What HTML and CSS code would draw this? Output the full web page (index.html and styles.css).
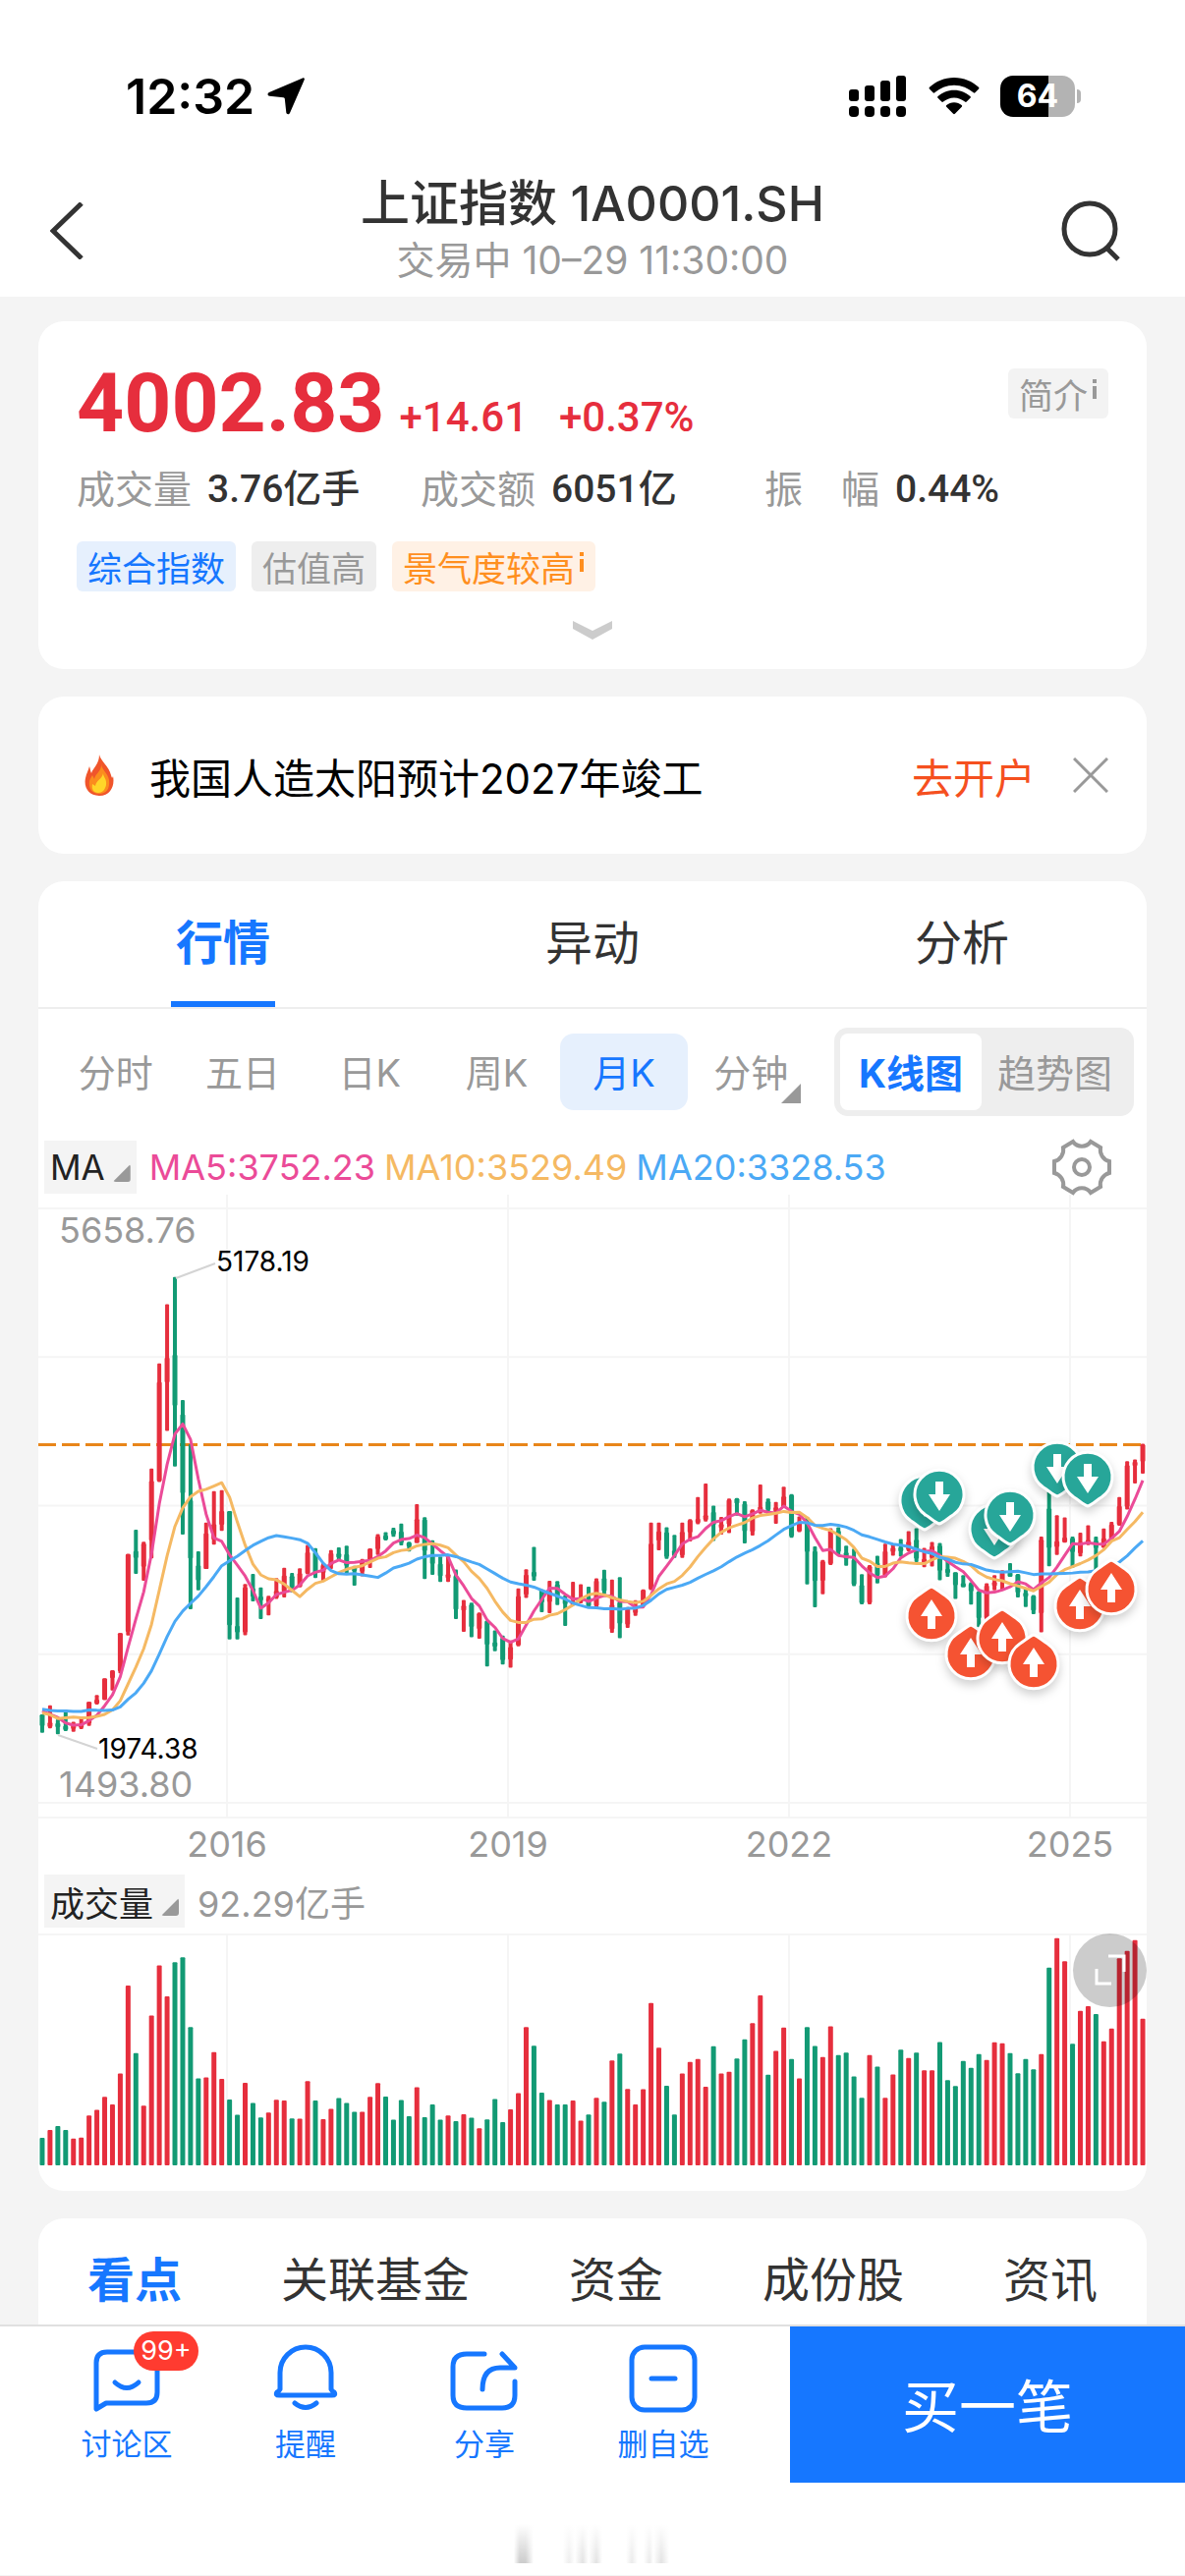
FILE: index.html
```html
<!DOCTYPE html>
<html lang="zh-CN">
<head>
    <meta charset="UTF-8">
    <meta name="viewport" content="width=device-width, initial-scale=1.0">
    <title>上证指数 1A0001.SH</title>
    <link rel="stylesheet" href="styles.css">
</head>
<body>
    <div class="status-bar">
        <div class="status-left">
            <span class="clock">12:32</span>
            <svg width="40" height="40" viewBox="0 0 40 40"><path d="M37 1.5c1.4-.6 2.300.3 1.700 1.700L24 37c-.8 1.900-3.400 1.700-3.700-.4L18.800 22.600c-.1-.9-.5-1.300-1.400-1.400L3.300 19.700c-2.100-.2-2.400-2.900-.4-3.700z"/></svg>
        </div>
        <div class="status-right">
            <svg width="60" height="42" viewBox="0 0 60 42">
                <rect x="0" y="14" width="10" height="12" rx="3"/><rect x="16" y="10" width="10" height="16" rx="3"/>
                <rect x="32" y="5" width="10" height="21" rx="3"/><rect x="48" y="0" width="10" height="26" rx="3"/>
                <rect x="0" y="31" width="10" height="11" rx="4"/><rect x="16" y="31" width="10" height="11" rx="4"/>
                <rect x="32" y="31" width="10" height="11" rx="4"/><rect x="48" y="31" width="10" height="11" rx="4"/>
            </svg>
            <svg width="52" height="38" viewBox="0 0 52 38">
                <path d="M26 0c10 0 18.500 3.900 25 9.800.6.6.6 1.200.1 1.700l-3.700 3.800c-.5.5-1.100.5-1.700 0C40.400 10.600 33.600 7.700 26 7.700S11.600 10.600 6.300 15.300c-.6.5-1.200.5-1.700 0L.9 11.500c-.5-.5-.5-1.100.1-1.700C7.500 3.900 16 0 26 0z"/>
                <path d="M26 12.700c6.500 0 12.200 2.500 16.400 6.300.7.6.7 1.200.1 1.800l-3.800 3.800c-.5.5-1.100.5-1.700 0-2.900-2.600-6.700-4.200-11-4.200s-8.100 1.600-11 4.200c-.6.5-1.200.5-1.700 0l-3.800-3.800c-.6-.6-.6-1.200.1-1.800 4.200-3.800 9.900-6.300 16.400-6.300z"/>
                <path d="M26 25.200c3 0 5.700 1.100 7.700 2.800.6.500.6 1.200.1 1.700l-6.900 7c-.6.600-1.200.6-1.800 0l-6.900-7c-.5-.5-.5-1.200.1-1.700 2-1.700 4.700-2.800 7.700-2.800z"/>
            </svg>
            <span class="battery">64</span>
        </div>
    </div>

    <header class="nav">
        <button class="icon-btn back" type="button" aria-label="返回">
            <svg width="34" height="58" viewBox="0 0 34 58"><path d="M32 1L3 29l29 28" fill="none" stroke="#333" stroke-width="5"/></svg>
        </button>
        <div class="nav-title">
            <h1>上证指数 1A0001.SH</h1>
            <p>交易中 10–29 11:30:00</p>
        </div>
        <button class="icon-btn search" type="button" aria-label="搜索">
            <svg width="60" height="62" viewBox="0 0 60 62" fill="none" stroke="#333" stroke-width="5"><circle cx="29" cy="29" r="26"/><path d="M46 48l12 12"/></svg>
        </button>
    </header>

    <main>
        <section class="card quote">
            <div class="quote-top">
                <strong class="price">4002.83</strong>
                <span class="change">+14.61</span>
                <span class="change">+0.37%</span>
                <button class="chip chip-intro" type="button">简介<svg width="6" height="20" viewBox="0 0 6 20" fill="currentColor"><path d="M1 0h4v4H1zM1 7h4v13H1z"/></svg></button>
            </div>
            <dl class="metrics">
                <div><dt>成交量</dt><dd>3.76亿手</dd></div>
                <div><dt>成交额</dt><dd>6051亿</dd></div>
                <div><dt>振　幅</dt><dd>0.44%</dd></div>
            </dl>
            <div class="chips">
                <span class="chip chip-blue">综合指数</span>
                <span class="chip">估值高</span>
                <span class="chip chip-orange">景气度较高<svg width="6" height="20" viewBox="0 0 6 20" fill="currentColor"><path d="M1 0h4v4H1zM1 7h4v13H1z"/></svg></span>
            </div>
            <button class="expand" type="button" aria-label="展开">
                <svg width="42" height="20" viewBox="0 0 42 20"><path d="M1 1l20 10L41 1v8L21 20 1 9z" fill="#ccc"/></svg>
            </button>
        </section>

        <section class="card notice">
            <svg class="fire" width="30" height="42" viewBox="0 0 30 42">
                <path d="M15 0c1 6 10 12 12 21 1 3 1 4 2 1 2 9-2 20-14 20C4 42-1 33 1 24c1-5 3-8 4-12 1 3 1 5 2 7C9 13 15 10 15 0z" fill="#f0552b"/>
                <path d="M17 9c0 6 7 10 8 17 1 9-3 14-10 14S4 35 5 27c1-3 2-4 3-6l2 4c1-6 8-8 7-16z" fill="#fb8c1e"/>
                <path d="M19 19c0 4 4 6 3 12-1 5-4 8-8 8-5 0-7-4-6-9l3 2c1-6 7-7 8-13z" fill="#ffd629"/>
            </svg>
            <p>我国人造太阳预计2027年竣工</p>
            <a href="#open">去开户</a>
            <button class="icon-btn" type="button" aria-label="关闭">
                <svg width="36" height="36" viewBox="0 0 36 36"><path d="M1 1l34 34M35 1L1 35" stroke="#999" stroke-width="3"/></svg>
            </button>
        </section>

        <section class="card market">
            <nav class="tabs">
                <button class="active" type="button"><span>行情</span></button>
                <button type="button"><span>异动</span></button>
                <button type="button"><span>分析</span></button>
            </nav>

            <div class="period-row">
                <div class="periods">
                    <button type="button">分时</button>
                    <button type="button">五日</button>
                    <button type="button">日K</button>
                    <button type="button">周K</button>
                    <button class="active" type="button">月K</button>
                    <button class="more" type="button">分钟</button>
                </div>
                <div class="switch">
                    <button class="active" type="button">K线图</button>
                    <button type="button">趋势图</button>
                </div>
            </div>

            <div class="indicator-row">
                <button class="indicator" type="button">MA</button>
                <span class="ma5">MA5:3752.23</span>
                <span class="ma10">MA10:3529.49</span>
                <span class="ma20">MA20:3328.53</span>
                <button class="icon-btn gear" type="button" aria-label="设置">
                    <svg width="60" height="58" viewBox="0 0 60 58" fill="none" stroke="#999" stroke-width="4">
                        <path d="M21 3A11 11 0 0 0 39 3L49 9A12 12 0 0 0 58 23V35A12 12 0 0 0 49 49L39 55A11 11 0 0 0 21 55L11 49A12 12 0 0 0 2 35V23A12 12 0 0 0 11 9Z"/>
                        <circle cx="30" cy="29" r="8"/>
                    </svg>
                </button>
            </div>

            <svg class="chart" id="price" viewBox="0 0 1128 684"></svg>

            <div class="indicator-row volume-row">
                <button class="indicator" type="button">成交量</button>
                <span class="volume-value">92.29亿手</span>
            </div>

            <div class="volume-box">
                <svg class="chart" id="volume" viewBox="0 0 1128 236"></svg>
                <button class="fullscreen" type="button" aria-label="全屏">
                    <svg width="75" height="75" viewBox="0 0 75 75" fill="none" stroke="#fff" stroke-width="3"><path d="M36 23h16v16M24 36v15h15"/></svg>
                </button>
            </div>
        </section>

        <nav class="card sections">
            <a class="active" href="#view">看点</a>
            <a href="#fund">关联基金</a>
            <a href="#money">资金</a>
            <a href="#stocks">成份股</a>
            <a href="#news">资讯</a>
        </nav>
    </main>

    <footer>
        <div class="toolbar">
            <div class="actions">
                <button type="button">
                    <svg width="72" height="72" viewBox="0 0 72 72"><path d="M5 66V19Q5 8 16 8H56Q67 8 67 19V49Q67 60 56 60H15ZM24 39Q36 50 48 39"/></svg>
                    <span>讨论区</span>
                    <i class="badge">99+</i>
                </button>
                <button type="button">
                    <svg width="72" height="72" viewBox="0 0 72 72"><path d="M10 46V29A26 26 0 0 1 62 29V46Q63 48 65 49Q67 52 63 52H9Q5 52 7 49Q9 48 10 46ZM25 60Q36 69 47 60"/></svg>
                    <span>提醒</span>
                </button>
                <button type="button">
                    <svg width="72" height="72" viewBox="0 0 72 72"><path d="M36 10H18Q4 10 4 23V52Q4 65 18 65H54Q67 65 67 52V38M34 46Q34 24 52 24H67L54 10"/></svg>
                    <span>分享</span>
                </button>
                <button type="button">
                    <svg width="72" height="72" viewBox="0 0 72 72"><rect x="4" y="3" width="64" height="64" rx="13"/><path d="M24 35H48"/></svg>
                    <span>删自选</span>
                </button>
            </div>
            <button class="buy" type="button">买一笔</button>
        </div>
        <div class="home-area"><div class="shade"></div></div>
    </footer>

    <script src="chart.js"></script>
</body>
</html>
```
FILE: styles.css
```css
* {
    box-sizing: border-box;
}

body {
    margin: 0;
    background: #f4f4f4;
    color: #333;
    font-family: Inter, "Noto Sans CJK SC", sans-serif;
}

button {
    margin: 0;
    padding: 0;
    border: 0;
    background: none;
    color: inherit;
    font: inherit;
    cursor: pointer;
}

a {
    color: inherit;
    text-decoration: none;
}

h1, p, dl, dd {
    margin: 0;
}

svg {
    display: block;
    flex: none;
}

/* status bar */
.status-bar {
    display: flex;
    justify-content: space-between;
    align-items: center;
    height: 160px;
    padding: 36px 112px 0 128px;
    background: #fff;
    color: #000;
}

.status-left,
.status-right {
    display: flex;
    align-items: center;
}

.status-left {
    gap: 12px;
}

.status-right {
    gap: 21px;
}

.clock {
    font-size: 50px;
    font-weight: 600;
}

.battery {
    position: relative;
    width: 76px;
    height: 42px;
    border-radius: 13px;
    background: linear-gradient(90deg, #000 64%, #b3b3b3 64%);
    color: #fff;
    font-size: 32px;
    font-weight: 700;
    line-height: 42px;
    text-align: center;
}

.battery::after {
    content: "";
    position: absolute;
    top: 14px;
    right: -6px;
    width: 4px;
    height: 14px;
    border-radius: 0 4px 4px 0;
    background: #b3b3b3;
}

/* navigation */
.nav {
    display: grid;
    grid-template-columns: 1fr auto 1fr;
    align-items: center;
    padding: 17px 51px 9px;
    background: #fff;
}

.nav-title {
    text-align: center;
}

.nav-title h1 {
    font-size: 50px;
    font-weight: 500;
    line-height: 60px;
}

.nav-title p {
    color: #999;
    font-size: 39px;
    line-height: 56px;
}

.search {
    justify-self: end;
    margin-right: 15px;
}

.back {
    justify-self: start;
}

/* cards */
main {
    display: flex;
    flex-direction: column;
    gap: 28px;
    padding: 25px 39px 0;
}

.card {
    border-radius: 26px;
    background: #fff;
    overflow: hidden;
}

.quote {
    padding: 38px 39px 30px;
}

.quote-top {
    display: flex;
    align-items: baseline;
    height: 90px;
    color: #e62e3d;
    font-family: Roboto, sans-serif;
    line-height: 92px;
}

.price {
    margin-right: 15px;
    font-size: 84px;
    font-weight: 700;
}

.change {
    margin-right: 32px;
    font-size: 42px;
    font-weight: 500;
}

.chip {
    display: flex;
    gap: 4px;
    padding: 0 11px;
    border-radius: 6px;
    background: #eee;
    color: #999;
    font-family: "Noto Sans CJK SC", sans-serif;
    font-size: 35px;
    line-height: 51px;
}

.chip svg {
    margin-top: 11px;
}

.chip-intro {
    align-self: flex-start;
    margin: 10px 0 0 auto;
    background: #f3f3f3;
}

.chip-blue {
    background: #e6f0fd;
    color: #1677ff;
}

.chip-orange {
    background: #fff1e5;
    color: #ff8f1f;
}

.metrics {
    display: grid;
    grid-template-columns: repeat(3, 1fr);
    margin-top: 18px;
    line-height: 50px;
    white-space: nowrap;
}

.metrics div {
    display: flex;
    gap: 16px;
    height: 50px;
}

.metrics dt {
    color: #999;
    font-size: 39px;
}

.metrics dd {
    font-family: Roboto, "Noto Sans CJK SC", sans-serif;
    font-size: 39px;
    font-weight: 500;
}

.chips {
    display: flex;
    gap: 16px;
    margin-top: 28px;
}

.expand {
    display: block;
    margin: 29px auto 0;
}

.notice {
    display: flex;
    align-items: center;
    height: 160px;
    padding: 0 39px 0 47px;
    color: #000;
    font-size: 42px;
}

.notice p {
    margin-left: 36px;
}

.notice a {
    margin: 0 38px 0 auto;
    color: #f5501f;
}

/* market card */
.tabs {
    display: grid;
    grid-template-columns: repeat(3, 1fr);
    height: 130px;
    border-bottom: 2px solid #eee;
    font-size: 48px;
}

.tabs span {
    display: inline-block;
    height: 128px;
    padding: 0 5px;
    line-height: 126px;
}

.tabs .active span {
    border-bottom: 6px solid #1677ff;
}

.tabs .active,
.sections .active {
    color: #1677ff;
    font-weight: 700;
}

.period-row {
    display: flex;
    align-items: center;
    gap: 20px;
    padding: 19px 13px 0 14px;
    color: #999;
    font-size: 38px;
}

.periods {
    display: grid;
    flex: 1;
    grid-template-columns: repeat(6, 1fr);
}

.periods button {
    position: relative;
    height: 78px;
    padding-bottom: 3px;
    border-radius: 14px;
}

.periods .active {
    background: #e6f0fd;
    color: #1677ff;
}

.more::after {
    content: "";
    position: absolute;
    right: 14px;
    bottom: 7px;
    border-bottom: 20px solid #999;
    border-left: 20px solid transparent;
}

.switch {
    display: flex;
    padding: 6px;
    border-radius: 14px;
    background: #eee;
    font-size: 39px;
}

.switch button {
    height: 78px;
    padding: 0 16px 3px;
}

.switch .active {
    padding: 0 19px 3px;
    border-radius: 8px;
    background: #fff;
    color: #1677ff;
    font-weight: 700;
}

.indicator-row {
    display: flex;
    align-items: center;
    gap: 9px;
    height: 54px;
    margin: 25px 36px 1px 6px;
    font-size: 36px;
}

.indicator {
    display: flex;
    align-items: center;
    gap: 8px;
    height: 54px;
    margin-right: 4px;
    padding: 0 6px 0 6px;
    background: #f4f4f4;
    color: #222;
    font-size: 35px;
}

.indicator::after {
    content: "";
    width: 18px;
    height: 18px;
    margin-top: 12px;
    border-radius: 3px;
    background: #999;
    clip-path: polygon(100% 0, 100% 100%, 0 100%);
}

.ma5 {
    color: #eb4b98;
}

.ma10 {
    color: #f5b963;
}

.ma20 {
    color: #4ba9f5;
}

.gear {
    margin-left: auto;
}

.volume-row {
    margin: 8px 36px 6px 6px;
}

.volume-value {
    color: #999;
}

.chart {
    width: 100%;
    height: auto;
}

.grid {
    stroke: #f5f5f5;
    stroke-width: 2;
}

.up {
    fill: #e62e3d;
}

.down {
    fill: #129a74;
}

.line {
    fill: none;
    stroke-width: 3;
    stroke-linejoin: round;
}

.line.ma5 {
    stroke: #eb4b98;
}

.line.ma10 {
    stroke: #f5b963;
}

.line.ma20 {
    stroke: #4ba9f5;
}

.current {
    stroke: #e8861a;
    stroke-width: 3;
    stroke-dasharray: 18 6;
}

.leader {
    stroke: #d4d4d4;
    stroke-width: 2;
}

.axis {
    fill: #999;
    font-size: 36px;
}

.extreme {
    fill: #000;
    font-size: 28px;
}

.marker {
    filter: drop-shadow(0 5px 5px rgba(0, 0, 0, 0.18));
}

.marker path {
    stroke: #fff;
    stroke-width: 3;
}

.marker .arrow {
    fill: #fff;
    stroke: none;
}

.buy-mark {
    fill: #f55332;
}

.sell-mark {
    fill: #27a699;
}

.volume-box {
    position: relative;
    padding-bottom: 26px;
}

.fullscreen {
    position: absolute;
    top: 0;
    right: 0;
    border-radius: 50%;
    background: rgba(0, 0, 0, 0.2);
}

.sections {
    display: flex;
    justify-content: space-between;
    padding: 18px 50px 0;
    border-radius: 26px 26px 0 0;
    font-size: 48px;
    line-height: 90px;
}

/* bottom toolbar */
footer {
    border-top: 2px solid #e0e0e0;
    background: #fff;
}

.toolbar {
    display: grid;
    grid-template-columns: 2fr 1fr;
    height: 159px;
}

.actions {
    display: grid;
    grid-template-columns: repeat(4, 1fr);
    padding: 0 38px;
}

.actions button {
    position: relative;
    display: flex;
    flex-direction: column;
    align-items: center;
    padding-top: 18px;
    color: #1677ff;
    font-size: 31px;
    line-height: 44px;
}

.actions svg {
    margin-bottom: 8px;
    fill: none;
    stroke: #1677ff;
    stroke-width: 5;
    stroke-linecap: round;
    stroke-linejoin: round;
}

.badge {
    position: absolute;
    top: 5px;
    left: 54%;
    padding: 0 7px;
    border-radius: 20px;
    background: #ff3b30;
    color: #fff;
    font-size: 27px;
    font-style: normal;
    line-height: 40px;
}

.buy {
    padding-bottom: 4px;
    background: #1677ff;
    color: #fff;
    font-size: 58px;
}

.home-area {
    height: 94px;
    padding-top: 42px;
}

.shade {
    width: 160px;
    height: 40px;
    margin: 0 auto;
    background:
        linear-gradient(#fff, transparent),
        linear-gradient(90deg, #fff, #ccc 6px, #ccc 12px, #fff 20px, #fff 50px, #eee 56px, #fff 62px, #e2e2e2 70px, #fff 76px, #e2e2e2 84px, #fff 90px, #fff 114px, #eaeaea 120px, #fff 126px, #fff 132px, #eaeaea 138px, #fff 142px, #e2e2e2 150px, #fff 158px);
}
```
FILE: chart.js
```js
// closes of the 19 months before the first candle, needed for the moving averages
const pastCloses = [
    2225.43, 2103.63, 2047.52, 2086.17, 2068.88, 1980.12, 2269.13, 2385.42, 2365.59, 2236.62,
    2177.91, 2300.60, 1979.21, 1993.80, 2098.38, 2174.67, 2141.61, 2220.50, 2115.98
];

// [open, high, low, close, volume], one row per month from 2014-01
const months = [
    [2112, 2113, 1984, 2033.08, 84], [2026, 2177, 2015, 2056.30, 108], [2051, 2079, 1974, 2033.31, 120],
    [2032, 2146, 1997, 2026.36, 108], [2022, 2061, 1991, 2039.21, 82], [2039, 2088, 2010, 2048.33, 85],
    [2050, 2202, 2033, 2201.56, 152], [2193, 2249, 2183, 2217.20, 169], [2217, 2366, 2214, 2363.87, 209],
    [2368, 2423, 2280, 2420.18, 186], [2417, 2683, 2401, 2682.84, 280], [2691, 3239, 2666, 3234.68, 548],
    [3258, 3407, 3098, 3210.36, 342], [3148, 3324, 3050, 3310.30, 182], [3332, 3836, 3206, 3747.90, 457],
    [3748, 4572, 3742, 4441.66, 610], [4441, 4987, 4100, 4611.74, 515], [4633, 5178, 3850, 4277.22, 619],
    [4214, 4317, 3374, 3663.73, 634], [3614, 4006, 2850, 3205.99, 422], [3157, 3256, 2983, 3052.78, 265],
    [3133, 3457, 3133, 3382.56, 268], [3338, 3678, 3302, 3445.40, 345], [3442, 3684, 3399, 3539.18, 264],
    [3536, 3539, 2638, 2737.60, 201], [2733, 2933, 2638, 2687.98, 154], [2688, 3028, 2668, 3003.92, 252],
    [2997, 3097, 2905, 2938.32, 190], [2940, 3004, 2781, 2916.62, 146], [2917, 2945, 2807, 2929.61, 161],
    [2932, 3069, 2922, 2979.34, 200], [2974, 3140, 2932, 3085.49, 198], [3083, 3105, 2969, 3004.70, 143],
    [3009, 3137, 3004, 3100.49, 142], [3102, 3301, 3094, 3250.03, 257], [3249, 3279, 3068, 3103.64, 198],
    [3105, 3174, 3044, 3159.17, 141], [3160, 3264, 3132, 3241.73, 172], [3240, 3283, 3193, 3222.51, 205],
    [3235, 3295, 3097, 3154.66, 190], [3145, 3154, 3016, 3117.18, 163], [3114, 3202, 3081, 3192.43, 163],
    [3193, 3276, 3139, 3273.03, 209], [3272, 3376, 3231, 3360.81, 251], [3366, 3391, 3332, 3348.94, 210],
    [3402, 3421, 3357, 3393.34, 139], [3393, 3450, 3297, 3317.19, 199], [3316, 3324, 3254, 3307.17, 150],
    [3315, 3587, 3315, 3480.83, 238], [3479, 3495, 3062, 3259.41, 147], [3235, 3333, 3091, 3168.90, 186],
    [3169, 3220, 3041, 3082.23, 139], [3087, 3220, 3041, 3095.47, 152], [3084, 3129, 2782, 2847.42, 135],
    [2841, 2915, 2691, 2876.40, 156], [2882, 2897, 2653, 2725.25, 145], [2713, 2828, 2644, 2821.35, 113],
    [2768, 2771, 2449, 2602.78, 140], [2618, 2702, 2555, 2588.19, 202], [2648, 2666, 2462, 2493.90, 132],
    [2498, 2631, 2441, 2584.57, 171], [2598, 2997, 2590, 2940.95, 220], [2954, 3130, 2930, 3090.76, 422],
    [3111, 3288, 3050, 3078.34, 365], [2985, 2990, 2830, 2898.70, 222], [2901, 3050, 2822, 2978.88, 199],
    [3024, 3048, 2879, 2932.51, 186], [2920, 2948, 2733, 2886.24, 186], [2886, 3042, 2878, 2905.19, 198],
    [2906, 3026, 2891, 2929.06, 136], [2932, 3008, 2858, 2871.98, 155], [2874, 3066, 2857, 3050.12, 206],
    [3066, 3127, 2956, 2976.53, 194], [2710, 3058, 2685, 2880.30, 320], [2899, 3075, 2647, 2750.30, 341],
    [2743, 2865, 2719, 2860.08, 233], [2832, 2914, 2803, 2852.35, 186], [2871, 2990, 2871, 2984.67, 232],
    [2991, 3458, 2984, 3310.01, 495], [3332, 3458, 3263, 3395.68, 359], [3389, 3425, 3202, 3218.05, 243],
    [3262, 3371, 3209, 3224.53, 155], [3228, 3457, 3209, 3391.76, 280], [3388, 3482, 3325, 3473.07, 315],
    [3474, 3637, 3446, 3483.07, 324], [3477, 3732, 3465, 3509.08, 240], [3531, 3577, 3328, 3441.91, 363],
    [3444, 3497, 3373, 3446.86, 280], [3446, 3626, 3384, 3615.48, 285], [3625, 3629, 3505, 3591.20, 326],
    [3588, 3608, 3312, 3397.36, 384], [3393, 3551, 3367, 3543.94, 434], [3544, 3724, 3520, 3568.17, 518],
    [3605, 3626, 3518, 3547.34, 276], [3551, 3602, 3449, 3563.89, 349], [3566, 3708, 3560, 3639.78, 420],
    [3650, 3657, 3350, 3361.44, 324], [3397, 3500, 3390, 3462.31, 265], [3465, 3497, 3024, 3252.20, 422],
    [3256, 3290, 2863, 3047.06, 364], [3050, 3196, 2955, 3186.43, 330], [3169, 3418, 3160, 3398.62, 424],
    [3399, 3424, 3226, 3253.24, 336], [3247, 3295, 3155, 3202.14, 344], [3196, 3275, 3012, 3024.39, 271],
    [3018, 3096, 2885, 2893.48, 206], [2894, 3159, 2885, 3151.34, 336], [3175, 3226, 3031, 3089.26, 301],
    [3088, 3310, 3073, 3255.67, 206], [3256, 3310, 3225, 3279.61, 277], [3283, 3342, 3219, 3272.86, 353],
    [3267, 3397, 3257, 3323.28, 327], [3337, 3418, 3180, 3204.56, 344], [3194, 3280, 3144, 3202.06, 290],
    [3209, 3322, 3150, 3291.04, 290], [3295, 3315, 3053, 3119.88, 376], [3132, 3205, 3078, 3110.48, 260],
    [3109, 3110, 2923, 3018.77, 242], [3032, 3090, 3005, 3029.67, 318], [3029, 3040, 2882, 2974.93, 297],
    [2972, 2977, 2724, 2788.55, 339], [2788, 3032, 2635, 3015.17, 321], [3015, 3090, 2983, 3041.17, 375],
    [3043, 3123, 2985, 3104.82, 372], [3106, 3174, 3078, 3086.81, 342], [3093, 3098, 2933, 2967.40, 281],
    [2965, 3000, 2865, 2938.75, 324], [2943, 2950, 2816, 2842.21, 293], [2823, 3360, 2689, 3336.50, 339],
    [3555, 3674, 3152, 3279.82, 603], [3288, 3509, 3230, 3326.46, 693], [3320, 3494, 3316, 3351.76, 622],
    [3347, 3359, 3140, 3250.60, 371], [3243, 3387, 3220, 3320.90, 471], [3325, 3439, 3300, 3335.75, 485],
    [3331, 3359, 3040, 3279.03, 461], [3282, 3417, 3280, 3347.49, 378], [3340, 3462, 3336, 3444.43, 417],
    [3442, 3636, 3435, 3573.21, 631], [3568, 3888, 3548, 3857.93, 654], [3876, 3899, 3732, 3882.78, 687],
    [3885, 4010, 3800, 4002.83, 447]
];

const WIDTH = 1128;
const STEP = WIDTH / months.length;
const MAX_PRICE = 5658.76;
const MIN_PRICE = 1493.80;
const PLOT_TOP = 14;
const PLOT_HEIGHT = 605;
const MAX_VOLUME = 707;
const years = [[192, 2016], [478, 2019], [764, 2022], [1050, 2025]];

const xOf = i => (i + 0.5) * STEP;
const yOf = p => PLOT_TOP + (MAX_PRICE - p) / (MAX_PRICE - MIN_PRICE) * PLOT_HEIGHT;
const line = (cls, x1, y1, x2, y2) => `<line class="${cls}" x1="${x1}" y1="${y1}" x2="${x2}" y2="${y2}"/>`;
const bar = (cls, x, w, top, bottom) =>
    `<rect class="${cls}" x="${x - w / 2}" y="${top}" width="${w}" height="${Math.max(bottom - top, 4)}" rx="1"/>`;

function average(n) {
    const closes = pastCloses.concat(months.map(m => m[3]));
    const points = months.map((m, i) => {
        const end = i + pastCloses.length + 1;
        const sum = closes.slice(end - n, end).reduce((a, b) => a + b, 0);
        return `${xOf(i)},${yOf(sum / n)}`;
    });
    return `<polyline class="line ma${n}" points="${points.join(' ')}"/>`;
}

// drop shaped flag, the tip points up for buy and down for sell
function marker(x, y, type) {
    const turn = type === 'sell' ? 180 : 0;
    return `<g class="marker"><g transform="translate(${x} ${y}) rotate(${turn})">
        <path class="${type}-mark" d="M0-29C4-28 9-23 14-20A25 25 0 1 1-14-20C-9-23-4-28 0-29Z"/>
        <path class="arrow" d="M0-16L11 1H4V14H-4V1H-11Z"/></g></g>`;
}

function drawPrice() {
    let out = '';
    for (let i = 0; i < 5; i++) {
        const y = PLOT_TOP + PLOT_HEIGHT / 4 * i;
        out += line('grid', 0, y, WIDTH, y);
    }
    out += line('grid', 0, 634, WIDTH, 634);
    years.forEach(([x, year]) => {
        out += line('grid', x, 0, x, 634);
        out += `<text class="axis" x="${x}" y="674" text-anchor="middle">${year}</text>`;
    });
    out += line('current', 0, yOf(4002.83), WIDTH, yOf(4002.83));
    months.forEach(([open, high, low, close], i) => {
        const cls = close >= open ? 'up' : 'down';
        out += bar(cls, xOf(i), 4, yOf(high), yOf(low));
        out += bar(cls, xOf(i), 5, yOf(Math.max(open, close)), yOf(Math.min(open, close)));
    });
    out += average(5) + average(10) + average(20);
    out += line('leader', 140, 85, 180, 70) + line('leader', 20, 550, 60, 564);
    out += '<text class="extreme" x="181" y="78">5178.19</text><text class="extreme" x="61" y="574">1974.38</text>';
    out += '<text class="axis" x="21" y="49">5658.76</text><text class="axis" x="21" y="613">1493.80</text>';
    [[902, 312], [917, 306], [973, 341], [989, 327], [1037, 278], [1068, 288]].forEach(p => {
        out += marker(p[0], p[1], 'sell');
    });
    [[909, 428], [949, 467], [981, 451], [1013, 477], [1060, 418], [1092, 401]].forEach(p => {
        out += marker(p[0], p[1], 'buy');
    });
    document.getElementById('price').innerHTML = out;
}

function drawVolume() {
    let out = line('grid', 0, 1, WIDTH, 1);
    years.forEach(([x]) => {
        out += line('grid', x, 0, x, 236);
    });
    months.forEach(([open, , , close, volume], i) => {
        out += bar(close >= open ? 'up' : 'down', xOf(i), 5, 236 - volume / MAX_VOLUME * 236, 236);
    });
    document.getElementById('volume').innerHTML = out;
}

drawPrice();
drawVolume();
```
